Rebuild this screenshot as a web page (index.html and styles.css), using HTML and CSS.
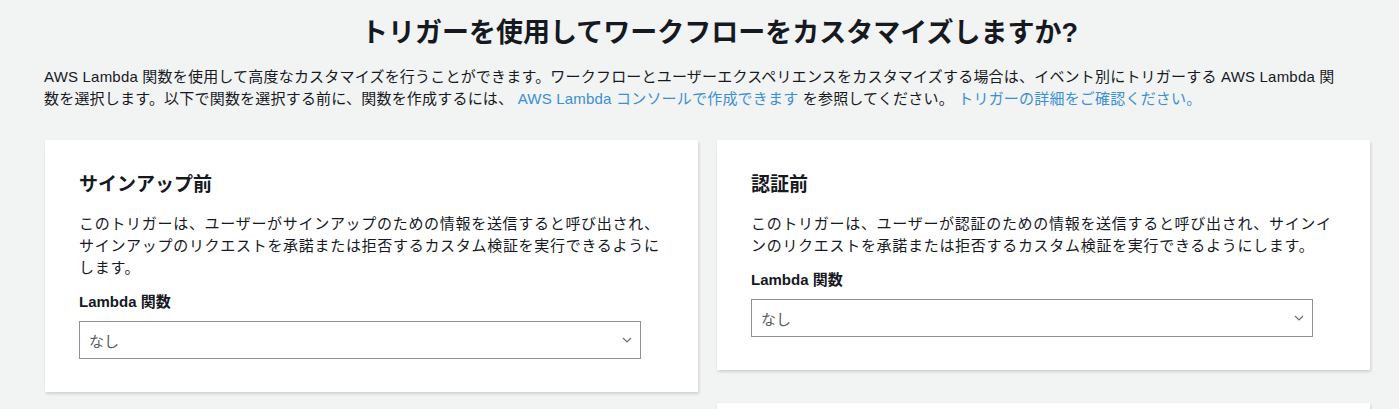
FILE: index.html
```html
<!DOCTYPE html>
<html lang="ja">
<head>
<meta charset="utf-8">
<title>トリガー</title>
<link rel="stylesheet" href="styles.css">
</head>
<body>
<main class="page">
  <h1 class="page-title">トリガーを使用してワークフローをカスタマイズしますか?</h1>
  <p class="intro">AWS Lambda 関数を使用して高度なカスタマイズを行うことができます。ワークフローとユーザーエクスペリエンスをカスタマイズする場合は、イベント別にトリガーする AWS Lambda 関<br>数を選択します。以下で関数を選択する前に、関数を作成するには、 <a class="link" href="#">AWS Lambda コンソールで作成できます</a> を参照してください。 <a class="link" href="#">トリガーの詳細をご確認ください。</a></p>

  <div class="columns">
    <div class="column">
      <section class="card">
        <h2 class="card-title">サインアップ前</h2>
        <p class="card-desc">このトリガーは、ユーザーがサインアップのための情報を送信すると呼び出され、<br>サインアップのリクエストを承諾または拒否するカスタム検証を実行できるように<br>します。</p>
        <label class="field-label">Lambda 関数</label>
        <div class="select">
          <span class="select-value">なし</span>
          <svg class="chevron" width="10" height="6" viewBox="0 0 10 6"><path d="M1 1 L5 5 L9 1" fill="none" stroke="#687078" stroke-width="1.2"/></svg>
        </div>
      </section>
      <section class="card card-next"></section>
    </div>
    <div class="column">
      <section class="card">
        <h2 class="card-title">認証前</h2>
        <p class="card-desc">このトリガーは、ユーザーが認証のための情報を送信すると呼び出され、サインイ<br>ンのリクエストを承諾または拒否するカスタム検証を実行できるようにします。</p>
        <label class="field-label">Lambda 関数</label>
        <div class="select">
          <span class="select-value">なし</span>
          <svg class="chevron" width="10" height="6" viewBox="0 0 10 6"><path d="M1 1 L5 5 L9 1" fill="none" stroke="#687078" stroke-width="1.2"/></svg>
        </div>
      </section>
      <section class="card card-next"></section>
    </div>
  </div>
</main>
</body>
</html>
```
FILE: styles.css
```css
html, body {
  margin: 0;
  padding: 0;
  background: #f2f3f3;
  overflow: hidden;
}
body {
  font-family: "Liberation Sans", "Noto Sans CJK JP", sans-serif;
  color: #16191f;
}
.page {
  padding: 15px 0 0 44px;
  width: 1351px;
}
.page-title {
  margin: 0;
  text-align: center;
  font-size: 27px;
  line-height: 36px;
  font-weight: bold;
  color: #16191f;
}
.intro {
  margin: 15px 0 0;
  font-size: 15px;
  line-height: 22px;
  letter-spacing: 0.2px;
  color: #16191f;
  white-space: nowrap;
}
.link {
  color: #3b8fd4;
  text-decoration: none;
}
.columns {
  display: flex;
  gap: 19px;
  margin-top: 30px;
  margin-left: 1px;
}
.column {
  display: flex;
  flex-direction: column;
  gap: 33px;
  width: 653px;
}
.card {
  background: #fff;
  padding: 32px 34px 33px;
  box-shadow: 1px 2px 3px rgba(0, 0, 0, 0.14), 0 0 1px rgba(0, 0, 0, 0.06);
}
.card-next {
  height: 160px;
}
.card-title {
  margin: 0;
  font-size: 19px;
  line-height: 26px;
  font-weight: bold;
}
.card-desc {
  margin: 15px 0 0;
  font-size: 15px;
  line-height: 22px;
  letter-spacing: 0.7px;
  white-space: nowrap;
}
.field-label {
  display: block;
  margin-top: 13px;
  font-size: 15px;
  line-height: 20px;
  font-weight: bold;
}
.select {
  margin-top: 9px;
  width: 562px;
  height: 38px;
  box-sizing: border-box;
  border: 1px solid #8d9296;
  display: flex;
  align-items: center;
  justify-content: space-between;
  padding: 0 8px 0 9px;
}
.select-value {
  font-size: 15px;
  color: #545b64;
}
.chevron {
  display: block;
}
```
